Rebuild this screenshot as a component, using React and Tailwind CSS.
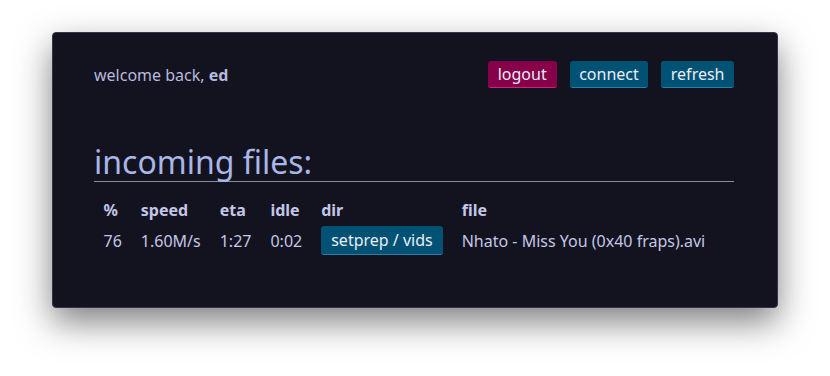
import React from 'react';

const files = [
  { pct: 76, speed: '1.60M/s', eta: '1:27', idle: '0:02', dir: 'setprep / vids', file: 'Nhato - Miss You (0x40 fraps).avi' },
];

export default function App() {
  return (
    <div className="min-h-[376px] bg-white pt-[32px] font-['Noto_Sans',sans-serif]">
      <div className="mx-auto w-[726px] rounded-[4px] border border-[#34344e] bg-[#13131f] pl-[41px] pr-[43px] pt-[28px] pb-[52px] shadow-[0_14px_34px_rgba(0,0,0,0.5)]">
        {/* top bar */}
        <div className="flex items-center justify-between">
          <div className="text-[16px] text-[#b6bade]">
            welcome back, <b className="font-bold">ed</b>
          </div>
          <div className="flex gap-[13.5px]">
            <button className="h-[27px] rounded-[3px] border-b border-[#d02378] bg-[#87004a] px-[10px] text-[16px] leading-[26px] text-[#ececf8]">
              logout
            </button>
            <button className="h-[27px] rounded-[3px] border-b border-[#2a7fae] bg-[#005274] px-[9px] text-[16px] leading-[26px] text-[#ececf8]">
              connect
            </button>
            <button className="h-[27px] rounded-[3px] border-b border-[#2a7fae] bg-[#005274] px-[9.5px] text-[16px] leading-[26px] text-[#ececf8]">
              refresh
            </button>
          </div>
        </div>

        <h2 className="mt-[55px] border-b border-[#8a8a9a] text-[32px] leading-[38px] text-[#a9b6e8]">
          incoming files:
        </h2>

        <table className="mt-[16px] text-left text-[16px] text-[#c3c6e6]">
          <thead>
            <tr className="font-bold">
              <th className="px-[9.5px] pb-[4px]">%</th>
              <th className="px-[9.5px] pb-[4px]">speed</th>
              <th className="px-[9.5px] pb-[4px]">eta</th>
              <th className="px-[9.5px] pb-[4px]">idle</th>
              <th className="px-[9.5px] pb-[4px]">dir</th>
              <th className="px-[9.5px] pb-[4px]">file</th>
            </tr>
          </thead>
          <tbody>
            {files.map((f, i) => (
              <tr key={i}>
                <td className="px-[9.5px]">{f.pct}</td>
                <td className="px-[9.5px]">{f.speed}</td>
                <td className="px-[9.5px]">{f.eta}</td>
                <td className="px-[9.5px]">{f.idle}</td>
                <td className="px-[9.5px]">
                  <button className="h-[29px] rounded-[3px] border-b border-[#2a7fae] bg-[#005274] px-[10px] text-[16px] leading-[28px] text-[#ececf8]">
                    {f.dir}
                  </button>
                </td>
                <td className="px-[9.5px]">{f.file}</td>
              </tr>
            ))}
          </tbody>
        </table>
      </div>
    </div>
  );
}
